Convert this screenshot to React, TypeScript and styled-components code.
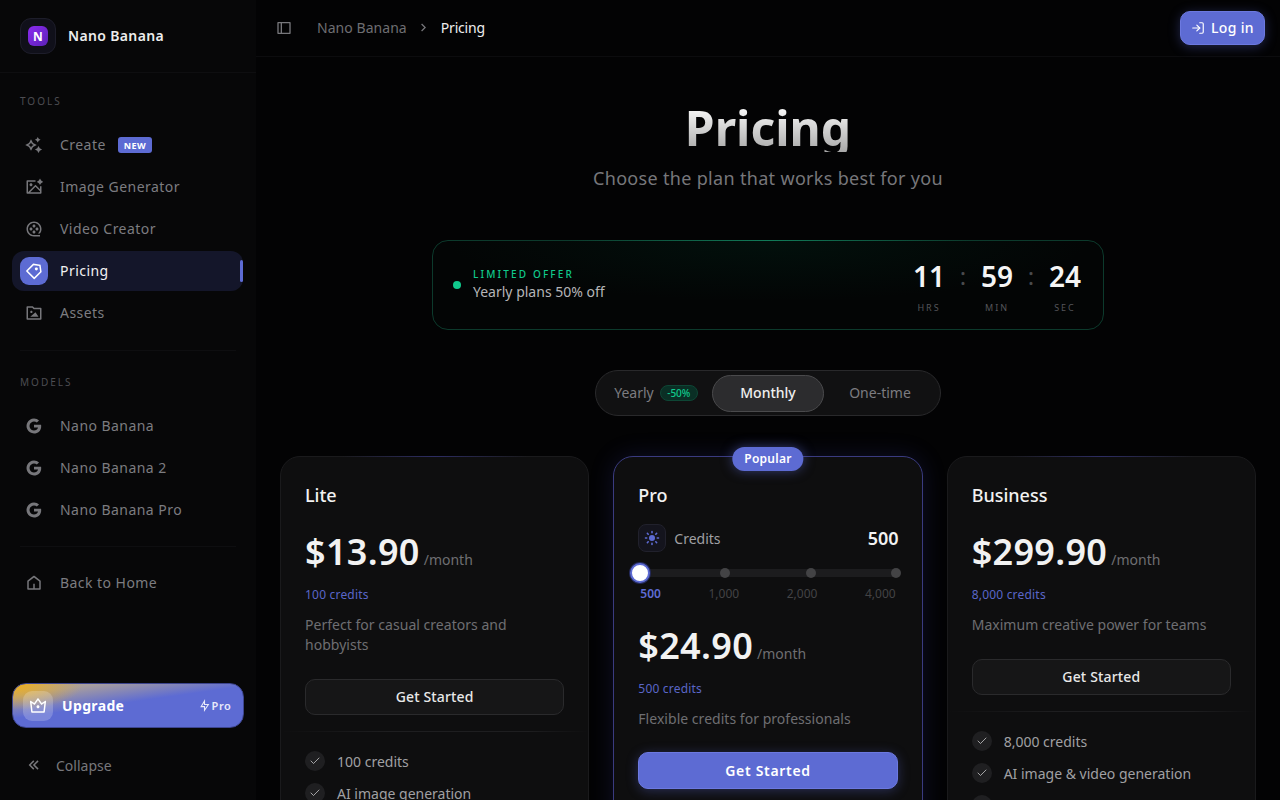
import styled, { createGlobalStyle } from "styled-components";
import { Check, LogIn } from "lucide-react";
import {
  RiSparkling2Line,
  RiImageAiLine,
  RiMovie2Line,
  RiPriceTag3Line,
  RiFolderImageLine,
  RiGoogleFill,
  RiHome5Line,
  RiVipCrown2Line,
  RiFlashlightLine,
  RiArrowLeftDoubleLine,
  RiLayoutLeftLine,
  RiArrowRightSLine,
} from "react-icons/ri";

const GlobalStyle = createGlobalStyle`
  html, body {
    margin: 0;
    height: 100%;
    overflow: hidden;
    background: #030304;
    font-family: "Noto Sans", "Open Sans", sans-serif;
    color: #fafafa;
  }
  * { box-sizing: border-box; }
`;

const ACCENT = "#5d6bd3";

const Shell = styled.div`
  display: flex;
  width: 1280px;
  height: 800px;
  overflow: hidden;
`;

const Sidebar = styled.aside`
  flex: 0 0 256px;
  display: flex;
  flex-direction: column;
  height: 800px;
  background: #070708;
`;

const Brand = styled.div`
  display: flex;
  align-items: center;
  gap: 12px;
  height: 73px;
  padding: 0 20px;
  border-bottom: 1px solid #0e0e10;
`;

const LogoTile = styled.div`
  width: 36px;
  height: 36px;
  display: flex;
  align-items: center;
  justify-content: center;
  border-radius: 11px;
  background: #10101a;
  border: 1px solid #1d1d2a;
`;

const LogoMark = styled.div`
  width: 20px;
  height: 20px;
  border-radius: 6px;
  display: flex;
  align-items: center;
  justify-content: center;
  background: linear-gradient(135deg, #8b2bf0, #5b21b6);
  font-size: 12px;
  font-weight: 700;
  color: #fff;
`;

const BrandName = styled.span`
  margin-top: -2px;
  font-size: 14px;
  font-weight: 600;
  letter-spacing: 0.35px;
  color: #ededed;
`;

const SectionLabel = styled.div<{ $top: number }>`
  margin: ${(p) => p.$top}px 0 0 20px;
  height: 16px;
  line-height: 16px;
  font-size: 10px;
  letter-spacing: 2px;
  color: #4d4d52;
`;

const NavList = styled.nav`
  display: flex;
  flex-direction: column;
  gap: 2px;
  padding: 0 13px 0 12px;
  margin-top: 16px;
`;

const NavItem = styled.div<{ $active?: boolean }>`
  position: relative;
  display: flex;
  align-items: center;
  height: 40px;
  border-radius: 12px;
  padding-left: 8px;
  gap: 12px;
  font-size: 14px;
  letter-spacing: 0.45px;
  color: ${(p) => (p.$active ? "#f2f2f2" : "#7c7c80")};
  background: ${(p) => (p.$active ? "#14162a" : "transparent")};
`;

const NavLabel = styled.span`
  padding-bottom: 1px;
`;

const NavIcon = styled.span<{ $active?: boolean }>`
  flex: 0 0 28px;
  width: 28px;
  height: 28px;
  display: flex;
  align-items: center;
  justify-content: center;
  border-radius: 9px;
  font-size: 18px;
  color: ${(p) => (p.$active ? "#fff" : "#77777b")};
  background: ${(p) => (p.$active ? ACCENT : "transparent")};
`;

const ActiveBar = styled.span`
  position: absolute;
  right: 0;
  top: 9px;
  width: 3px;
  height: 22px;
  border-radius: 2px;
  background: ${ACCENT};
`;

const NewTag = styled.span`
  height: 16px;
  padding: 0 6px;
  border-radius: 3px;
  display: flex;
  align-items: center;
  font-size: 9px;
  font-weight: 700;
  letter-spacing: 0.4px;
  color: #fff;
  background: ${ACCENT};
`;

const SideRule = styled.div<{ $top: number }>`
  height: 1px;
  margin: ${(p) => p.$top}px 20px 0;
  background: #0e0e10;
`;

const SideFooter = styled.div`
  margin-top: auto;
  padding: 0 12.5px 15px 12px;
  display: flex;
  flex-direction: column;
`;

const UpgradeButton = styled.div`
  display: flex;
  align-items: center;
  height: 45px;
  padding: 0 11px 0 10px;
  border-radius: 14px;
  color: #fff;
  border: 1px solid #3d4590;
  background:
    radial-gradient(ellipse 70px 26px at 0% 0%, #f0b01a 0%, rgba(240, 176, 26, 0) 100%),
    linear-gradient(172deg, #b9a892 0%, #a89e9e 16%, ${ACCENT} 46%);
`;

const CrownTile = styled.span`
  width: 30px;
  height: 30px;
  border-radius: 9px;
  display: flex;
  align-items: center;
  justify-content: center;
  font-size: 18px;
  background: rgba(255, 255, 255, 0.2);
`;

const UpgradeText = styled.span`
  margin-left: 9px;
  font-size: 14px;
  font-weight: 700;
  letter-spacing: 0.35px;
`;

const ProMark = styled.span`
  margin-left: auto;
  display: flex;
  align-items: center;
  gap: 1px;
  font-size: 11px;
  font-weight: 600;
  letter-spacing: 0.6px;
  color: #e8e9fa;
`;

const CollapseRow = styled.div`
  display: flex;
  align-items: center;
  height: 40px;
  margin-top: 17px;
  padding-left: 13px;
  gap: 13px;
  font-size: 14px;
  color: #77777b;
`;

const Main = styled.main`
  flex: 1;
  min-width: 0;
  height: 800px;
  overflow: hidden;
`;

const Header = styled.header`
  display: flex;
  align-items: center;
  height: 57px;
  padding: 0 15px 1px 20px;
  border-bottom: 1px solid #0c0c0e;
`;

const PanelIcon = styled.span`
  display: flex;
  font-size: 16px;
  color: #77777b;
`;

const Crumb = styled.span<{ $current?: boolean }>`
  font-size: 14px;
  letter-spacing: ${(p) => (p.$current ? "-0.2px" : "0.05px")};
  color: ${(p) => (p.$current ? "#eeeeee" : "#6e6e72")};
`;

const CrumbSep = styled.span`
  display: flex;
  margin: 0 10px 0 9px;
  font-size: 15px;
  color: #77777b;
`;

const Crumbs = styled.div`
  display: flex;
  align-items: center;
  margin-left: 25px;
`;

const LoginButton = styled.button`
  margin-left: auto;
  display: flex;
  align-items: center;
  gap: 6px;
  width: 85px;
  height: 34px;
  justify-content: center;
  border: 1px solid #6c79e0;
  border-radius: 10px;
  background: ${ACCENT};
  color: #fff;
  font: 500 14px "Noto Sans", sans-serif;
  letter-spacing: 0.35px;
  box-shadow: 0 2px 12px rgba(93, 107, 211, 0.35);
`;

const Content = styled.div`
  display: flex;
  flex-direction: column;
  align-items: center;
  padding: 47px 24px 0;
`;

const Title = styled.h1`
  margin: 0;
  height: 48px;
  font-size: 48px;
  line-height: 48px;
  font-weight: 700;
  background: linear-gradient(180deg, #ffffff 0%, #a8a8a8 100%);
  -webkit-background-clip: text;
  background-clip: text;
  color: transparent;
`;

const Subtitle = styled.p`
  margin: 12px 0 0;
  font-size: 18px;
  line-height: 28px;
  letter-spacing: 0.32px;
  color: #77777b;
`;

const OfferBanner = styled.section`
  position: relative;
  display: flex;
  align-items: center;
  width: 672px;
  height: 90px;
  margin-top: 48px;
  padding: 0 20px;
  border-radius: 16px;
  border: 1px solid #0c3a2c;
  background: radial-gradient(ellipse 320px 60px at 50% 0%, #02100c 0%, #030505 100%);
  &::before {
    content: "";
    position: absolute;
    top: -1px;
    left: 20%;
    right: 20%;
    height: 1px;
    background: linear-gradient(90deg, transparent, #117a58, transparent);
  }
`;

const PulseDot = styled.span`
  width: 8px;
  height: 8px;
  border-radius: 50%;
  background: #10c98c;
`;

const OfferCopy = styled.div`
  margin-left: 12px;
  display: flex;
  flex-direction: column;
  margin-top: -3px;
`;

const OfferKicker = styled.span`
  font-size: 10px;
  line-height: 16px;
  font-weight: 500;
  letter-spacing: 2.15px;
  color: #10c98c;
`;

const OfferText = styled.span`
  font-size: 14px;
  line-height: 20px;
  color: #b5b5b8;
`;

const Countdown = styled.div`
  margin-left: auto;
  display: flex;
  align-items: flex-start;
  padding-top: 2px;
`;

const TimeCell = styled.div`
  width: 36px;
  display: flex;
  flex-direction: column;
  align-items: center;
`;

const TimeValue = styled.span`
  font-size: 28px;
  line-height: 36px;
  font-weight: 600;
  color: #f5f5f5;
`;

const TimeUnit = styled.span`
  margin-top: 7px;
  font-size: 9px;
  line-height: 14px;
  letter-spacing: 2px;
  color: #55555a;
`;

const TimeColon = styled.span`
  width: 32px;
  text-align: center;
  font-size: 24px;
  line-height: 36px;
  color: #4a4a4d;
`;

const Toggle = styled.div`
  display: flex;
  align-items: center;
  height: 46px;
  margin-top: 40px;
  padding: 0 4px;
  border-radius: 23px;
  background: #111112;
  border: 1px solid #29292b;
`;

const ToggleOption = styled.div<{ $active?: boolean }>`
  display: flex;
  align-items: center;
  justify-content: center;
  gap: 6px;
  width: 112px;
  height: 37px;
  padding-bottom: 1px;
  border-radius: 19px;
  font-size: 14px;
  font-weight: ${(p) => (p.$active ? 500 : 400)};
  color: ${(p) => (p.$active ? "#f0f0f0" : "#7c7c80")};
  background: ${(p) => (p.$active ? "#2c2c2e" : "transparent")};
  border: 1px solid ${(p) => (p.$active ? "#4a4a4c" : "transparent")};
`;

const SaveTag = styled.span`
  height: 16px;
  padding: 0 6.5px;
  border-radius: 8px;
  display: flex;
  align-items: center;
  font-size: 10px;
  font-weight: 500;
  color: #10c98c;
  background: #0a2f25;
  border: 1px solid #0e4635;
`;

const CardGrid = styled.div`
  display: grid;
  grid-template-columns: repeat(3, 1fr);
  gap: 24px;
  width: 100%;
  margin-top: 40px;
  align-items: start;
`;

const Card = styled.article<{ $popular?: boolean }>`
  position: relative;
  padding: 24px;
  height: 480px;
  border-radius: 20px;
  background: #0e0e0f;
  border: 1px solid ${(p) => (p.$popular ? "#3a3b80" : "#1a1a1c")};
  box-shadow: ${(p) => (p.$popular ? "0 0 24px rgba(70, 80, 200, 0.18)" : "none")};
  &::before {
    content: "";
    position: absolute;
    top: -1px;
    left: 20%;
    right: 20%;
    height: 1px;
    background: linear-gradient(90deg, transparent, #2d2d63, transparent);
    display: ${(p) => (p.$popular ? "none" : "block")};
  }
`;

const PopularBadge = styled.span`
  position: absolute;
  top: -10px;
  left: 50%;
  transform: translateX(-50%);
  height: 24px;
  padding: 0 12px 1px;
  border-radius: 12px;
  display: flex;
  align-items: center;
  font-size: 12px;
  font-weight: 600;
  letter-spacing: 0.25px;
  color: #fff;
  background: ${ACCENT};
  box-shadow: 0 0 12px rgba(93, 107, 211, 0.5);
`;

const PlanName = styled.h2`
  margin: 0;
  font-size: 18px;
  line-height: 28px;
  font-weight: 500;
  color: #f2f2f2;
`;

const CreditsRow = styled.div`
  display: flex;
  align-items: center;
  margin-top: 15px;
  gap: 8px;
  font-size: 14px;
  color: #a0a0a3;
`;

const CreditsIcon = styled.span`
  width: 28px;
  height: 28px;
  border-radius: 8px;
  display: flex;
  align-items: center;
  justify-content: center;
  color: ${ACCENT};
  background: #14141d;
  border: 1px solid #21212c;
`;

const CreditsValue = styled.span`
  margin: 0 -1px 0 auto;
  font-size: 18px;
  line-height: 28px;
  font-weight: 600;
  color: #f2f2f2;
`;

const SliderTrack = styled.div`
  position: relative;
  height: 8px;
  margin: 17px 0 0 2px;
  border-radius: 4px;
  background: #1c1c1e;
`;

const SliderMark = styled.span<{ $left: number }>`
  position: absolute;
  top: -1px;
  left: ${(p) => p.$left}px;
  width: 10px;
  height: 10px;
  border-radius: 50%;
  background: #434345;
`;

const SliderThumb = styled.span`
  position: absolute;
  top: -6px;
  left: -10px;
  width: 20px;
  height: 20px;
  border-radius: 50%;
  background: #fff;
  border: 2px solid ${ACCENT};
  box-shadow: 0 0 0 1px #242a5c;
`;

const SliderLabels = styled.div`
  display: flex;
  justify-content: space-between;
  margin: 9px 2px 0 2px;
`;

const SliderLabel = styled.span<{ $active?: boolean }>`
  font-size: 12px;
  line-height: 16px;
  font-weight: ${(p) => (p.$active ? 600 : 400)};
  color: ${(p) => (p.$active ? ACCENT : "#434345")};
`;

const PriceRow = styled.div<{ $top: number }>`
  display: flex;
  align-items: baseline;
  gap: 4px;
  margin-top: ${(p) => p.$top}px;
`;

const PriceValue = styled.span`
  font-size: 36px;
  line-height: 40px;
  font-weight: 600;
  letter-spacing: 0.3px;
  color: #f2f2f2;
`;

const PricePeriod = styled.span`
  font-size: 14px;
  color: #6e6e72;
`;

const CreditNote = styled.div`
  margin-top: 15px;
  font-size: 12px;
  line-height: 16px;
  letter-spacing: 0.2px;
  color: #5a66c8;
`;

const PlanBlurb = styled.p`
  margin: 12px 0 0;
  font-size: 14px;
  line-height: 20px;
  letter-spacing: 0.03px;
  color: #6e6e72;
`;

const PlanButton = styled.button<{ $primary?: boolean }>`
  display: block;
  width: 100%;
  margin-top: ${(p) => (p.$primary ? 23 : 24)}px;
  height: ${(p) => (p.$primary ? 37 : 36)}px;
  padding: 0 0 ${(p) => (p.$primary ? 0 : 2)}px;
  border-radius: 10px;
  font: ${(p) => (p.$primary ? 600 : 500)} 14px "Noto Sans", sans-serif;
  letter-spacing: ${(p) => (p.$primary ? 0.7 : 0.15)}px;
  color: ${(p) => (p.$primary ? "#fff" : "#e8e8e8")};
  background: ${(p) => (p.$primary ? ACCENT : "#161617")};
  border: 1px solid ${(p) => (p.$primary ? "#6c79e0" : "#2a2a2c")};
  box-shadow: ${(p) => (p.$primary ? "0 2px 12px rgba(93, 107, 211, 0.35)" : "none")};
`;

const CardRule = styled.div`
  height: 1px;
  margin: 16px -24px 19px;
  background: linear-gradient(90deg, transparent, #1e1e20 35%, #1e1e20 80%, transparent);
`;

const Features = styled.ul`
  list-style: none;
  margin: 0;
  padding: 0;
  display: flex;
  flex-direction: column;
  gap: 12px;
`;

const Feature = styled.li`
  display: flex;
  align-items: center;
  gap: 12px;
  height: 20px;
  font-size: 14px;
  color: #a0a0a3;
`;

const CheckDot = styled.span`
  width: 20px;
  height: 20px;
  border-radius: 50%;
  display: flex;
  align-items: center;
  justify-content: center;
  color: #d0d0d2;
  background: #1f1f21;
`;

const CreditsGlyph = () => (
  <svg width="16" height="16" viewBox="0 0 16 16" fill="currentColor">
    <circle cx="8" cy="8" r="3" />
    <g stroke="currentColor" strokeWidth="1.6" strokeLinecap="round">
      <path d="M8 1.5v1.2M8 13.3v1.2M1.5 8h1.2M13.3 8h1.2M3.4 3.4l.8.8M11.8 11.8l.8.8M3.4 12.6l.8-.8M11.8 4.2l.8-.8" />
    </g>
  </svg>
);

const tools = [
  { label: "Create", icon: <RiSparkling2Line />, tag: "NEW" },
  { label: "Image Generator", icon: <RiImageAiLine /> },
  { label: "Video Creator", icon: <RiMovie2Line /> },
  { label: "Pricing", icon: <RiPriceTag3Line />, active: true },
  { label: "Assets", icon: <RiFolderImageLine /> },
];

const models = ["Nano Banana", "Nano Banana 2", "Nano Banana Pro"];

// the third row of Business only shows its check circle above the fold
const FeatureList = ({ items }: { items: string[] }) => (
  <Features>
    {items.map((item, i) => (
      <Feature key={`feature_${i}`}>
        <CheckDot>
          <Check size={12} strokeWidth={1.5} />
        </CheckDot>
        {item}
      </Feature>
    ))}
  </Features>
);

const App = () => (
  <Shell>
    <GlobalStyle />
    <Sidebar>
      <Brand>
        <LogoTile>
          <LogoMark>N</LogoMark>
        </LogoTile>
        <BrandName>Nano Banana</BrandName>
      </Brand>
      <SectionLabel $top={20}>TOOLS</SectionLabel>
      <NavList>
        {tools.map((t) => (
          <NavItem key={t.label} $active={t.active}>
            <NavIcon $active={t.active}>{t.icon}</NavIcon>
            <NavLabel>{t.label}</NavLabel>
            {t.tag && <NewTag>{t.tag}</NewTag>}
            {t.active && <ActiveBar />}
          </NavItem>
        ))}
      </NavList>
      <SideRule $top={17} />
      <SectionLabel $top={23}>MODELS</SectionLabel>
      <NavList>
        {models.map((m) => (
          <NavItem key={m}>
            <NavIcon>
              <RiGoogleFill />
            </NavIcon>
            <NavLabel>{m}</NavLabel>
          </NavItem>
        ))}
      </NavList>
      <SideRule $top={16} />
      <NavList>
        <NavItem>
          <NavIcon>
            <RiHome5Line />
          </NavIcon>
          <NavLabel>Back to Home</NavLabel>
        </NavItem>
      </NavList>
      <SideFooter>
        <UpgradeButton>
          <CrownTile>
            <RiVipCrown2Line />
          </CrownTile>
          <UpgradeText>Upgrade</UpgradeText>
          <ProMark>
            <RiFlashlightLine size={13} />
            Pro
          </ProMark>
        </UpgradeButton>
        <CollapseRow>
          <RiArrowLeftDoubleLine size={18} />
          Collapse
        </CollapseRow>
      </SideFooter>
    </Sidebar>
    <Main>
      <Header>
        <PanelIcon>
          <RiLayoutLeftLine />
        </PanelIcon>
        <Crumbs>
          <Crumb>Nano Banana</Crumb>
          <CrumbSep>
            <RiArrowRightSLine />
          </CrumbSep>
          <Crumb $current>Pricing</Crumb>
        </Crumbs>
        <LoginButton>
          <LogIn size={14} />
          Log in
        </LoginButton>
      </Header>
      <Content>
        <Title>Pricing</Title>
        <Subtitle>Choose the plan that works best for you</Subtitle>
        <OfferBanner>
          <PulseDot />
          <OfferCopy>
            <OfferKicker>LIMITED OFFER</OfferKicker>
            <OfferText>Yearly plans 50% off</OfferText>
          </OfferCopy>
          <Countdown>
            <TimeCell>
              <TimeValue>11</TimeValue>
              <TimeUnit>HRS</TimeUnit>
            </TimeCell>
            <TimeColon>:</TimeColon>
            <TimeCell>
              <TimeValue>59</TimeValue>
              <TimeUnit>MIN</TimeUnit>
            </TimeCell>
            <TimeColon>:</TimeColon>
            <TimeCell>
              <TimeValue>24</TimeValue>
              <TimeUnit>SEC</TimeUnit>
            </TimeCell>
          </Countdown>
        </OfferBanner>
        <Toggle>
          <ToggleOption>
            Yearly <SaveTag>-50%</SaveTag>
          </ToggleOption>
          <ToggleOption $active>Monthly</ToggleOption>
          <ToggleOption>One-time</ToggleOption>
        </Toggle>
        <CardGrid>
          <Card>
            <PlanName>Lite</PlanName>
            <PriceRow $top={23}>
              <PriceValue>$13.90</PriceValue>
              <PricePeriod>/month</PricePeriod>
            </PriceRow>
            <CreditNote>100 credits</CreditNote>
            <PlanBlurb>Perfect for casual creators and hobbyists</PlanBlurb>
            <PlanButton>Get Started</PlanButton>
            <CardRule />
            <FeatureList items={["100 credits", "AI image generation"]} />
          </Card>
          <Card $popular>
            <PopularBadge>Popular</PopularBadge>
            <PlanName>Pro</PlanName>
            <CreditsRow>
              <CreditsIcon>
                <CreditsGlyph />
              </CreditsIcon>
              Credits
              <CreditsValue>500</CreditsValue>
            </CreditsRow>
            <SliderTrack>
              <SliderMark $left={80} />
              <SliderMark $left={166} />
              <SliderMark $left={251} />
              <SliderThumb />
            </SliderTrack>
            <SliderLabels>
              <SliderLabel $active>500</SliderLabel>
              <SliderLabel>1,000</SliderLabel>
              <SliderLabel>2,000</SliderLabel>
              <SliderLabel>4,000</SliderLabel>
            </SliderLabels>
            <PriceRow $top={24}>
              <PriceValue>$24.90</PriceValue>
              <PricePeriod>/month</PricePeriod>
            </PriceRow>
            <CreditNote>500 credits</CreditNote>
            <PlanBlurb>Flexible credits for professionals</PlanBlurb>
            <PlanButton $primary>Get Started</PlanButton>
          </Card>
          <Card>
            <PlanName>Business</PlanName>
            <PriceRow $top={23}>
              <PriceValue>$299.90</PriceValue>
              <PricePeriod>/month</PricePeriod>
            </PriceRow>
            <CreditNote>8,000 credits</CreditNote>
            <PlanBlurb>Maximum creative power for teams</PlanBlurb>
            <PlanButton>Get Started</PlanButton>
            <CardRule />
            <FeatureList items={["8,000 credits", "AI image & video generation", ""]} />
          </Card>
        </CardGrid>
      </Content>
    </Main>
  </Shell>
);

export default App;
